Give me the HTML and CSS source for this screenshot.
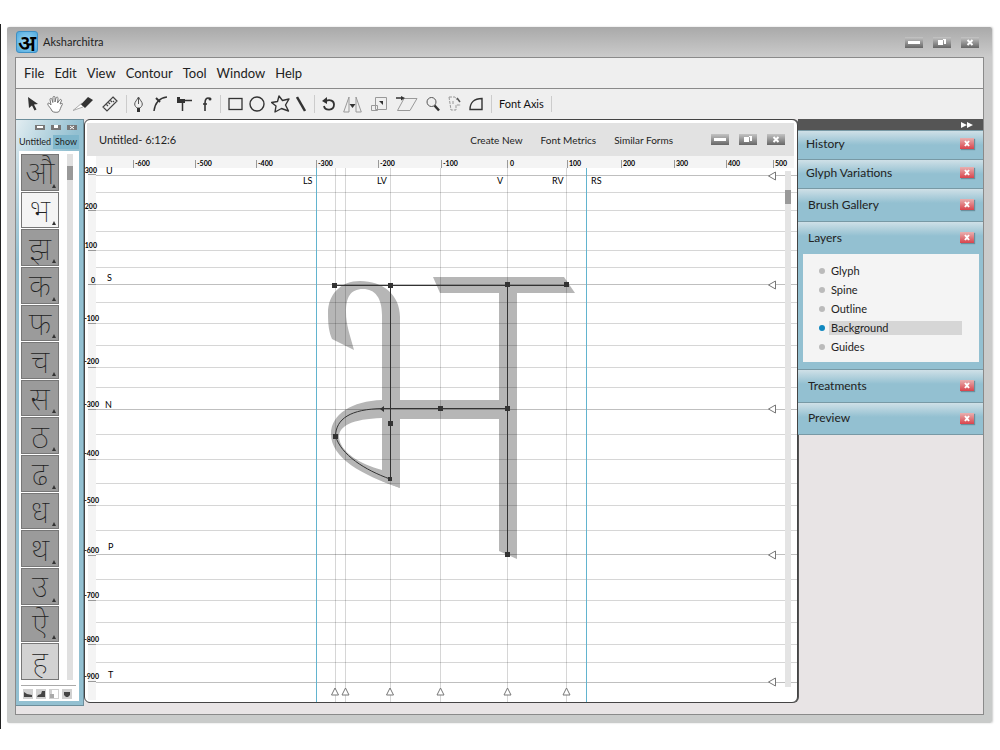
FILE: index.html
```html
<!DOCTYPE html>
<html lang="en">
<head>
  <meta charset="UTF-8" />
  <meta name="viewport" content="width=device-width, initial-scale=1" />
  <title>Aksharchitra</title>
  <link rel="stylesheet" href="styles.css">
</head>
<body>
  <div class="app">
    <!-- Title bar -->
    <header class="titlebar">
      <span class="logo" lang="hi">अ</span>
      <h1>Aksharchitra</h1>
      <div class="win-buttons">
        <button class="win-btn" aria-label="Minimize"><svg width="18" height="11" viewBox="0 0 18 11"><rect x="3" y="4" width="12" height="3" fill="#fff"/></svg></button>
        <button class="win-btn" aria-label="Restore"><svg width="18" height="11" viewBox="0 0 18 11"><path d="M5 3h5v5H5zM10 2h3v5h-2V3h-1z" fill="#fff"/></svg></button>
        <button class="win-btn" aria-label="Close"><svg width="18" height="11" viewBox="0 0 18 11"><path d="M6.500 3l5 5M11.500 3l-5 5" stroke="#fff" stroke-width="2"/></svg></button>
      </div>
    </header>

    <div class="frame">
      <!-- Menu -->
      <nav class="menu">
        <button>File</button>
        <button>Edit</button>
        <button>View</button>
        <button>Contour</button>
        <button>Tool</button>
        <button>Window</button>
        <button>Help</button>
      </nav>

      <!-- Tools -->
      <div class="toolbar">
        <div class="tools tools-select">
          <button aria-label="Select"><svg width="10" height="16" viewBox="0 0 10 16"><path d="M0 1l1 11 3-2.500 2.500 5 2-1-2.500-5 4-.5z" fill="#333"/></svg></button>
          <button aria-label="Hand"><svg width="16" height="18" viewBox="0 0 16 18"><path d="M5 16C4 13 1 11 .7 9c0-1.500 1.800-1 3.300 1L3 4.500C3 3 4.800 3 5 4.500l.8 3L6 2.500C6 1 8 1 8 2.500v4.500l1-4c.5-1.500 2.300-1 2 .5l-.5 4.500 2-3c1-1.300 2.500-.3 1.800 1L13 9c2-1 3-.5 2.300.5C14 11 13 16 11.500 17c-2 .5-5 .5-6.500-1z" fill="#fff" stroke="#777"/></svg></button>
          <button aria-label="Knife"><svg width="21" height="16" viewBox="0 0 21 16"><path d="M10 7L1 14.500l10-3.500" fill="#fff" stroke="#aaa"/><path d="M16 1l5 3-8 8-4-3.500z" fill="#333"/></svg></button>
          <button aria-label="Measure"><svg width="16" height="16" viewBox="0 0 16 16"><path d="M11 1l4 4L5 15l-4-4zM8 4l2 2M6 6l2 2M4 8l2 2M11 5l1 1" fill="none" stroke="#444" stroke-width="1.200"/></svg></button>
        </div>
        <div class="tools tools-draw">
          <button aria-label="Pen"><svg width="9" height="17" viewBox="0 0 9 17"><path d="M4.500 1C3 4 .7 6 .7 8c0 2 1.300 3 2.300 4h3c1-1 2.300-2 2.300-4 0-2-2.300-4-3.800-7zM4.500 1v7" fill="none" stroke="#555"/><path d="M3 12h3v4H3z" fill="#333"/></svg></button>
          <button aria-label="Curve"><svg width="14" height="16" viewBox="0 0 14 16"><path d="M1 15C2 7 6 2 14 1" fill="none" stroke="#333" stroke-width="1.500"/><path d="M3 2l4 4" stroke="#333" stroke-width="2"/></svg></button>
          <button aria-label="Corner"><svg width="15" height="16" viewBox="0 0 15 16"><path d="M3 4.500h12M5.500 4.500V15" fill="none" stroke="#333" stroke-width="1.500"/><path d="M0 1h3v6H0zM3 3h5v4H3z" fill="#333"/></svg></button>
          <button aria-label="Tangent"><svg width="10" height="16" viewBox="0 0 10 16"><path d="M3 15V9M3 9V7c0-4 2-6 5-4.500M1 8h4" fill="none" stroke="#333" stroke-width="1.600"/><circle cx="8" cy="3" r="1.500" fill="#333"/></svg></button>
        </div>
        <div class="tools tools-shape">
          <button aria-label="Rectangle"><svg width="15" height="16" viewBox="0 0 15 16"><rect x="1" y="2.500" width="13" height="11" fill="none" stroke="#333" stroke-width="1.300"/></svg></button>
          <button aria-label="Ellipse"><svg width="16" height="16" viewBox="0 0 16 16"><circle cx="8" cy="8" r="7" fill="none" stroke="#333" stroke-width="1.400"/></svg></button>
          <button aria-label="Star"><svg width="19" height="18" viewBox="0 0 19 18"><path d="M8 1l3.500 4.500L18 4l-3.500 6 3 6-7-2.500L4 17l1-6-4.500-3.500L6.500 6.500z" fill="none" stroke="#333" stroke-width="1.400" stroke-linejoin="round"/></svg></button>
          <button aria-label="Line"><svg width="10" height="16" viewBox="0 0 10 16"><path d="M1 1l8 14" stroke="#333" stroke-width="2.500"/></svg></button>
        </div>
        <div class="tools tools-transform">
          <button aria-label="Rotate"><svg width="13" height="14" viewBox="0 0 13 14"><path d="M2 9c1 5 10 5 10-1.500C12 4 8 2 4 4" fill="none" stroke="#333" stroke-width="1.800"/><path d="M5 0v7L0 4z" fill="#333"/></svg></button>
          <button aria-label="Mirror"><svg width="19" height="17" viewBox="0 0 19 17"><path d="M6 1v15H.7zM13 1v15h5.300z" fill="none" stroke="#999"/><path d="M6.500 8h6l-3 4z" fill="#333"/></svg></button>
          <button aria-label="Scale"><svg width="18" height="16" viewBox="0 0 18 16"><path d="M5.500 1.500h11v12h-11zM1.500 9.500h6v5h-6z" fill="none" stroke="#999"/><path d="M9 5h4v4z" fill="#333"/></svg></button>
          <button aria-label="Shear"><svg width="22" height="16" viewBox="0 0 22 16"><path d="M8 2.500h13l-7 12H1.500z" fill="none" stroke="#999"/><path d="M0 2h6" stroke="#333" stroke-width="1.500"/><path d="M5 0l4 2-4 2.500z" fill="#333"/></svg></button>
          <button aria-label="Zoom"><svg width="14" height="16" viewBox="0 0 14 16"><circle cx="5.500" cy="6" r="4.500" fill="none" stroke="#555"/><path d="M8.500 9.500l4.500 5" stroke="#333" stroke-width="2.500"/></svg></button>
          <button aria-label="Select area"><svg width="13" height="16" viewBox="0 0 13 16"><path d="M1 1h6l2 3M1 1l2 13h5V9h5M5 5v4" fill="none" stroke="#999" stroke-dasharray="3 1"/><path d="M9 2l3 4" stroke="#555" stroke-width="1.500"/></svg></button>
          <button aria-label="Arc"><svg width="14" height="16" viewBox="0 0 14 16"><path d="M1 13.500h12v-11C5 2.500 1 7 1 13.500z" fill="none" stroke="#333" stroke-width="1.400"/></svg></button>
        </div>
        <button class="font-axis">Font Axis</button>
      </div>

      <main class="workspace">
        <!-- Glyph list -->
        <section class="glyph-panel">
          <div class="mini-buttons">
            <button aria-label="Minimize"><svg width="10" height="5" viewBox="0 0 10 5"><rect x="2" y="1" width="6" height="2" fill="#fff"/></svg></button>
            <button aria-label="Restore"><svg width="10" height="5" viewBox="0 0 10 5"><path d="M3 0h4v3H3z" fill="#fff"/></svg></button>
            <button aria-label="Close"><svg width="10" height="5" viewBox="0 0 10 5"><path d="M3 1l4 3M7 1L3 4" stroke="#fff"/></svg></button>
          </div>
          <div class="glyph-tabs">
            <span>Untitled</span>
            <button>Show</button>
          </div>
          <div class="glyph-box">
            <div class="glyph-scroll">
              <div class="glyph-list" lang="hi">
                <button>औ</button>
                <button class="active">भ</button>
                <button>झ</button>
                <button>क</button>
                <button>फ</button>
                <button>च</button>
                <button>स</button>
                <button>ठ</button>
                <button>ढ</button>
                <button>ध</button>
                <button>थ</button>
                <button>उ</button>
                <button>ऐ</button>
                <button class="last">ह</button>
              </div>
              <div class="track"><div class="thumb"></div></div>
            </div>
            <div class="glyph-actions">
              <button aria-label="Small view"><svg width="10" height="10" viewBox="0 0 10 10"><path d="M1 3l3 2 5 1v2H1z" fill="#444"/></svg></button>
              <button aria-label="Large view"><svg width="10" height="10" viewBox="0 0 10 10"><path d="M2 6l3-1 1-3h3v6H1z" fill="#444"/></svg></button>
              <button aria-label="Split view"><svg width="10" height="10" viewBox="0 0 10 10"><rect x="3" y="1" width="6" height="8" fill="#fff"/><rect x="1" y="5" width="4" height="4" fill="#aaa"/></svg></button>
              <button aria-label="Delete"><svg width="10" height="10" viewBox="0 0 10 10"><path d="M2 3h6v3L6 8H4L2 6z" fill="#444"/></svg></button>
            </div>
          </div>
        </section>

        <!-- Editor -->
        <section class="editor">
          <div class="editor-head">
            <h2>Untitled- 6:12:6</h2>
            <div class="editor-links">
              <button>Create New</button>
              <button>Font Metrics</button>
              <button>Similar Forms</button>
            </div>
            <div class="win-buttons">
              <button class="win-btn" aria-label="Minimize"><svg width="18" height="11" viewBox="0 0 18 11"><rect x="3" y="4" width="12" height="3" fill="#fff"/></svg></button>
              <button class="win-btn" aria-label="Restore"><svg width="18" height="11" viewBox="0 0 18 11"><path d="M5 3h5v5H5zM10 2h3v5h-2V3h-1z" fill="#fff"/></svg></button>
              <button class="win-btn" aria-label="Close"><svg width="18" height="11" viewBox="0 0 18 11"><path d="M6.500 3l5 5M11.500 3l-5 5" stroke="#fff" stroke-width="2"/></svg></button>
            </div>
          </div>
          <svg class="canvas" viewBox="85 156 712 546">
            <!-- rulers -->
            <rect x="96" y="156" width="698" height="12" fill="#f4f4f4"/>
            <rect x="88" y="168" width="8" height="532" fill="#f4f4f4"/>
            <path class="tick" d="M133.500 160v8M195.500 160v8M256.500 160v8M316.500 160v8M378.500 160v8M441.500 160v8M507.500 160v8M567.500 160v8M621.500 160v8M674.500 160v8M726.500 160v8M773.500 160v8"/>
            <path class="tick" d="M88 174.500h8M88 210.500h8M88 250.500h8M88 284.500h8M88 323.500h8M88 367.500h8M88 409.500h8M88 459.500h8M88 505.500h8M88 555.500h8M88 600.500h8M88 644.500h8M88 681.500h8"/>
            <g class="num">
              <text x="135" y="166">-600</text><text x="197" y="166">-500</text><text x="258" y="166">-400</text>
              <text x="318" y="166">-300</text><text x="380" y="166">-200</text><text x="443" y="166">-100</text>
              <text x="510" y="166">0</text><text x="569" y="166">100</text><text x="623" y="166">200</text>
              <text x="676" y="166">300</text><text x="728" y="166">400</text><text x="775" y="166">500</text>
            </g>
            <!-- glyph shape -->
            <g class="shape">
              <path d="M332 339C329 332 328 325 328 313C328 294 341 281 360 281C383 281 400 295 400 317V488L382 481V315C382 298 375 289 363 289C350 289 346 298 346 312C346 325 350 335 354 350Z"/>
              <path d="M382 400C352 401 331 414 331 434C331 458 362 475 400 488L382 470C360 464 340 452 339 437C339 426 352 419 382 418Z"/>
              <path d="M382 400H500V419H382Z"/>
              <path d="M433 277H564L575 293H440Z"/>
              <path d="M499 277H517V559L499 551Z"/>
            </g>
            <!-- grid -->
            <path class="grid" d="M96 192.500H797M96 210.500H797M96 231.500H797M96 250.500H797M96 267.500H797M96 302.500H797M96 323.500H797M96 345.500H797M96 367.500H797M96 387.500H797M96 434.500H797M96 459.500H797M96 483.500H797M96 505.500H797M96 530.500H797M96 579.500H797M96 600.500H797M96 622.500H797M96 644.500H797M96 662.500H797"/>
            <path class="grid strong" d="M96 175.500H797M96 284.500H797M96 409.500H797M96 554.500H797M96 682.500H797"/>
            <path class="grid" d="M335.500 168V702M345.500 168V702M390.500 168V702M440.500 168V702M507.500 168V702M566.500 168V702"/>
            <path class="guide" d="M316.500 168V702M586.500 168V702"/>
            <g class="mark">
              <text x="303" y="184">LS</text><text x="377" y="184">LV</text><text x="497" y="184">V</text>
              <text x="552" y="184">RV</text><text x="591" y="184">RS</text>
              <text x="106" y="174">U</text><text x="107" y="281">S</text><text x="105" y="408">N</text>
              <text x="108" y="550">P</text><text x="108" y="678">T</text>
            </g>
            <g class="num side">
              <text x="97" y="173">300</text><text x="97" y="209">200</text><text x="97" y="248">100</text>
              <text x="95" y="283">0</text><text x="99" y="321">-100</text><text x="99" y="364">-200</text>
              <text x="99" y="407">-300</text><text x="99" y="456">-400</text><text x="99" y="503">-500</text>
              <text x="99" y="553">-600</text><text x="99" y="598">-700</text><text x="99" y="642">-800</text>
              <text x="99" y="679">-900</text>
            </g>
            <!-- spine -->
            <path class="spine" d="M334 285.500H567M390.500 285V479M507.500 285V555M508 408.500H383C350 409 336 419 335.500 436C341 455 365 470 390 479"/>
            <path class="node" d="M332 283h5v5h-5zM388 283h5v5h-5zM505 282h5v5h-5zM564 282h5v5h-5zM438 406h5v5h-5zM505 406h5v5h-5zM388 421h5v5h-5zM333 434h5v5h-5zM505 552h5v5h-5zM388 477h4v4h-4zM380 409l4-3v6z"/>
            <!-- handles -->
            <path class="handle" d="M768.500 176l7-4v8zM768.500 285l7-4v8zM768.500 409l7-4v8zM768.500 555l7-4v8zM768.500 682l7-4v8z"/>
            <path class="handle" d="M335 688l3.500 7h-7zM345.500 688l3.500 7h-7zM390 688l3.500 7h-7zM440.500 688l3.500 7h-7zM507.500 688l3.500 7h-7zM566.500 688l3.500 7h-7z"/>
            <rect x="785" y="171" width="6" height="516" fill="#e4e4e4"/>
            <rect x="785" y="190" width="6" height="14" fill="#999"/>
          </svg>
        </section>

        <!-- Side panels -->
        <aside class="sidebar">
          <div class="sidebar-top">
            <button aria-label="Collapse panels"><svg width="12" height="6" viewBox="0 0 12 6"><path d="M0 0l6 3-6 3zM6 0l6 3-6 3z" fill="#fff"/></svg></button>
          </div>
          <section class="panel panel-short">
            <h3>History</h3>
            <button class="close" aria-label="Close History"><svg width="14" height="11" viewBox="0 0 14 11"><path d="M5 3l4 5M9 3L5 8" stroke="#fff" stroke-width="2"/></svg></button>
          </section>
          <section class="panel panel-short">
            <h3>Glyph Variations</h3>
            <button class="close" aria-label="Close Glyph Variations"><svg width="14" height="11" viewBox="0 0 14 11"><path d="M5 3l4 5M9 3L5 8" stroke="#fff" stroke-width="2"/></svg></button>
          </section>
          <section class="panel">
            <h3>Brush Gallery</h3>
            <button class="close" aria-label="Close Brush Gallery"><svg width="14" height="11" viewBox="0 0 14 11"><path d="M5 3l4 5M9 3L5 8" stroke="#fff" stroke-width="2"/></svg></button>
          </section>
          <section class="panel">
            <h3>Layers</h3>
            <button class="close" aria-label="Close Layers"><svg width="14" height="11" viewBox="0 0 14 11"><path d="M5 3l4 5M9 3L5 8" stroke="#fff" stroke-width="2"/></svg></button>
          </section>
          <div class="layers">
            <div class="layers-box">
              <label><input type="radio" name="layer"><span>Glyph</span></label>
              <label><input type="radio" name="layer"><span>Spine</span></label>
              <label><input type="radio" name="layer"><span>Outline</span></label>
              <label><input type="radio" name="layer" checked><span>Background</span></label>
              <label><input type="radio" name="layer"><span>Guides</span></label>
            </div>
          </div>
          <section class="panel">
            <h3>Treatments</h3>
            <button class="close" aria-label="Close Treatments"><svg width="14" height="11" viewBox="0 0 14 11"><path d="M5 3l4 5M9 3L5 8" stroke="#fff" stroke-width="2"/></svg></button>
          </section>
          <section class="panel panel-end">
            <h3>Preview</h3>
            <button class="close" aria-label="Close Preview"><svg width="14" height="11" viewBox="0 0 14 11"><path d="M5 3l4 5M9 3L5 8" stroke="#fff" stroke-width="2"/></svg></button>
          </section>
        </aside>
      </main>
    </div>
  </div>
</body>
</html>
```

FILE: styles.css
```css
:root {
  --text-color: #222;
  --panel-blue: #93c0d1;
  --panel-light: #cfe0e7;
  --line-color: #8a8a8a;
  --glyph-font: "Noto Sans", sans-serif;
}

* {
  box-sizing: border-box;
}

body {
  margin: 24px 0 0;
  padding: 3px 8px 6px 6px;
  border-left: 1px solid #222;
  background: #fff;
  font-family: Lato, sans-serif;
  font-size: 12px;
  line-height: 16px;
  color: var(--text-color);
}

h1,
h2,
h3 {
  margin: 0;
  font-size: 11px;
  font-weight: 400;
}

h3 {
  font-size: 12px;
}

button {
  margin: 0;
  padding: 0;
  border: 0;
  background: none;
  font: inherit;
  color: inherit;
  cursor: pointer;
}

svg {
  display: block;
}

.app {
  padding: 0 8px 8px;
  border-radius: 2px;
  background: linear-gradient(#a9a9a9, #cbcbcb 30px, #c9cbca);
  box-shadow: 1px 0 2px #ccc;
}

/* Title bar */
.titlebar {
  display: flex;
  align-items: center;
  height: 30px;
}

.logo {
  width: 22px;
  height: 22px;
  margin: 0 5px 0 1px;
  border: 1px solid #3d8fc4;
  border-radius: 3px;
  background: radial-gradient(#a4dcf8, #4fa9dd);
  font: 600 22px/20px var(--glyph-font);
  color: #000;
  text-align: center;
}

.win-buttons {
  display: flex;
  gap: 10px;
  margin-left: auto;
}

.titlebar .win-buttons {
  margin-right: 5px;
}

.win-btn {
  background: linear-gradient(#c4c4c4, #666);
}

/* Menu and tools */
.frame {
  border: 1px solid #8a8a8a;
  background: #e8e4e5;
}

.menu {
  display: flex;
  align-items: center;
  gap: 10px;
  height: 31px;
  padding: 0 8px;
  border-bottom: 1px solid var(--line-color);
  background: #efefef;
  font-size: 13px;
}

.toolbar {
  display: flex;
  align-items: center;
  height: 30px;
  padding: 0 5px;
  background: #efefef;
}

.tools {
  display: flex;
  align-items: center;
  height: 18px;
  padding: 0 8px 0 7px;
  border-right: 1px solid #ccc;
}

.tools-select {
  gap: 9px;
}

.tools-draw {
  gap: 10px;
}

.tools-shape {
  gap: 6px;
}

.tools-transform {
  gap: 8px;
}

.font-axis {
  padding: 0 7px;
  border-right: 1px solid #ccc;
  font-size: 11px;
  color: #111;
}

.workspace {
  display: grid;
  grid-template-columns: 68px 1fr 185px;
  padding-bottom: 8px;
}

/* Glyph list */
.glyph-panel {
  display: flex;
  flex-direction: column;
  padding: 5px 4px 4px 3px;
  border: 1px solid #6d8e9b;
  border-left: 0;
  background: linear-gradient(115deg, #e2edf1, var(--panel-blue) 60px);
}

.mini-buttons {
  display: flex;
  justify-content: flex-end;
  gap: 6px;
  padding-right: 2px;
}

.mini-buttons button {
  background: #777;
}

.glyph-tabs {
  display: flex;
  justify-content: space-between;
  align-items: center;
  padding: 4px 0 1px;
  font-size: 9px;
}

.glyph-tabs button {
  padding: 0 2px;
  background: #7fb6cb;
  line-height: 14px;
}

.glyph-box {
  display: flex;
  flex: 1;
  flex-direction: column;
  padding: 3px 3px 2px 2px;
  background: #fff;
}

.glyph-scroll {
  display: flex;
  flex: 1;
  justify-content: space-between;
  padding-right: 3px;
}

.glyph-list {
  display: grid;
  grid-auto-rows: 1fr;
  gap: 1px;
  width: 38px;
}

.glyph-list button {
  position: relative;
  overflow: hidden;
  border: 1px solid #777;
  background: #9b9b9b;
  font: 100 32px/32px var(--glyph-font);
}

.glyph-list button::after {
  content: "";
  position: absolute;
  right: 2px;
  bottom: 2px;
  border: 2px solid transparent;
  border-top: 0;
  border-bottom: 4px solid #333;
}

.glyph-list .active {
  background: #f4f4f4;
}

.glyph-list .last {
  background: #d2d2d2;
}

.glyph-list .last::after {
  display: none;
}

.track {
  width: 6px;
  padding-top: 12px;
  background: #e0e0e0;
}

.thumb {
  height: 14px;
  background: #999;
}

.glyph-actions {
  display: flex;
  gap: 3px;
  margin-top: 5px;
  padding: 3px 0 0 2px;
  border-top: 1px solid #aaa;
}

.glyph-actions button {
  background: #d0d0d0;
}

/* Editor */
.editor {
  margin: 0 0 3px;
  border: 1px solid #444;
  border-radius: 6px;
  background: #fff;
  box-shadow: 1px 0 0 #555;
}

.editor-head {
  display: flex;
  align-items: center;
  height: 33px;
  margin: 3px 3px 0 2px;
  padding: 0 9px 0 12px;
  background: #e2e2e2;
}

.editor-links {
  display: flex;
  gap: 18px;
  margin-left: auto;
  font-size: 10px;
}

.editor-head .win-buttons {
  margin-left: 38px;
}

.canvas {
  width: 100%;
  overflow: visible;
  font-family: Lato, sans-serif;
}

.tick {
  stroke: #999;
}

.num {
  font-size: 7px;
  font-weight: 700;
}

.side {
  text-anchor: end;
}

.mark {
  font-size: 9px;
}

.grid {
  stroke: #000;
  stroke-opacity: 0.16;
}

.strong {
  stroke-opacity: 0.25;
}

.guide {
  stroke: #62b4cf;
}

.shape {
  fill: #b6b6b6;
}

.spine {
  fill: none;
  stroke: #333;
}

.node {
  fill: #333;
}

.handle {
  fill: #fff;
  stroke: #777;
}

/* Side panels */
.sidebar-top {
  display: flex;
  justify-content: flex-end;
  align-items: center;
  height: 11px;
  padding-right: 10px;
  background: #555;
}

.panel {
  display: flex;
  justify-content: space-between;
  align-items: center;
  height: 33px;
  padding: 0 9px 1px 10px;
  border-top: 1px solid #7899a5;
  background: linear-gradient(var(--panel-light), var(--panel-blue) 14px);
}

.panel-short {
  height: 29px;
  padding: 0 9px 3px 8px;
}

.panel-end {
  border-bottom: 1px solid #7899a5;
}

.close {
  background: linear-gradient(#e8b0b0, #d9444c);
  box-shadow: 1px 1px 1px #6a8f9d;
}

.layers {
  padding: 0 4px 7px 5px;
  background: var(--panel-blue);
}

.layers-box {
  padding: 7px 17px 6px 16px;
  background: #f4f4f4;
}

.layers label {
  display: flex;
  align-items: center;
  gap: 4px;
  height: 19px;
  font-size: 11px;
}

.layers input {
  appearance: none;
  width: 6px;
  height: 6px;
  margin: 0;
  border-radius: 50%;
  background: #bbb;
}

.layers span {
  flex: 1;
  padding-left: 2px;
  line-height: 14px;
}

.layers input:checked {
  background: #1088c0;
}

.layers input:checked + span {
  background: #d6d6d6;
}
```
